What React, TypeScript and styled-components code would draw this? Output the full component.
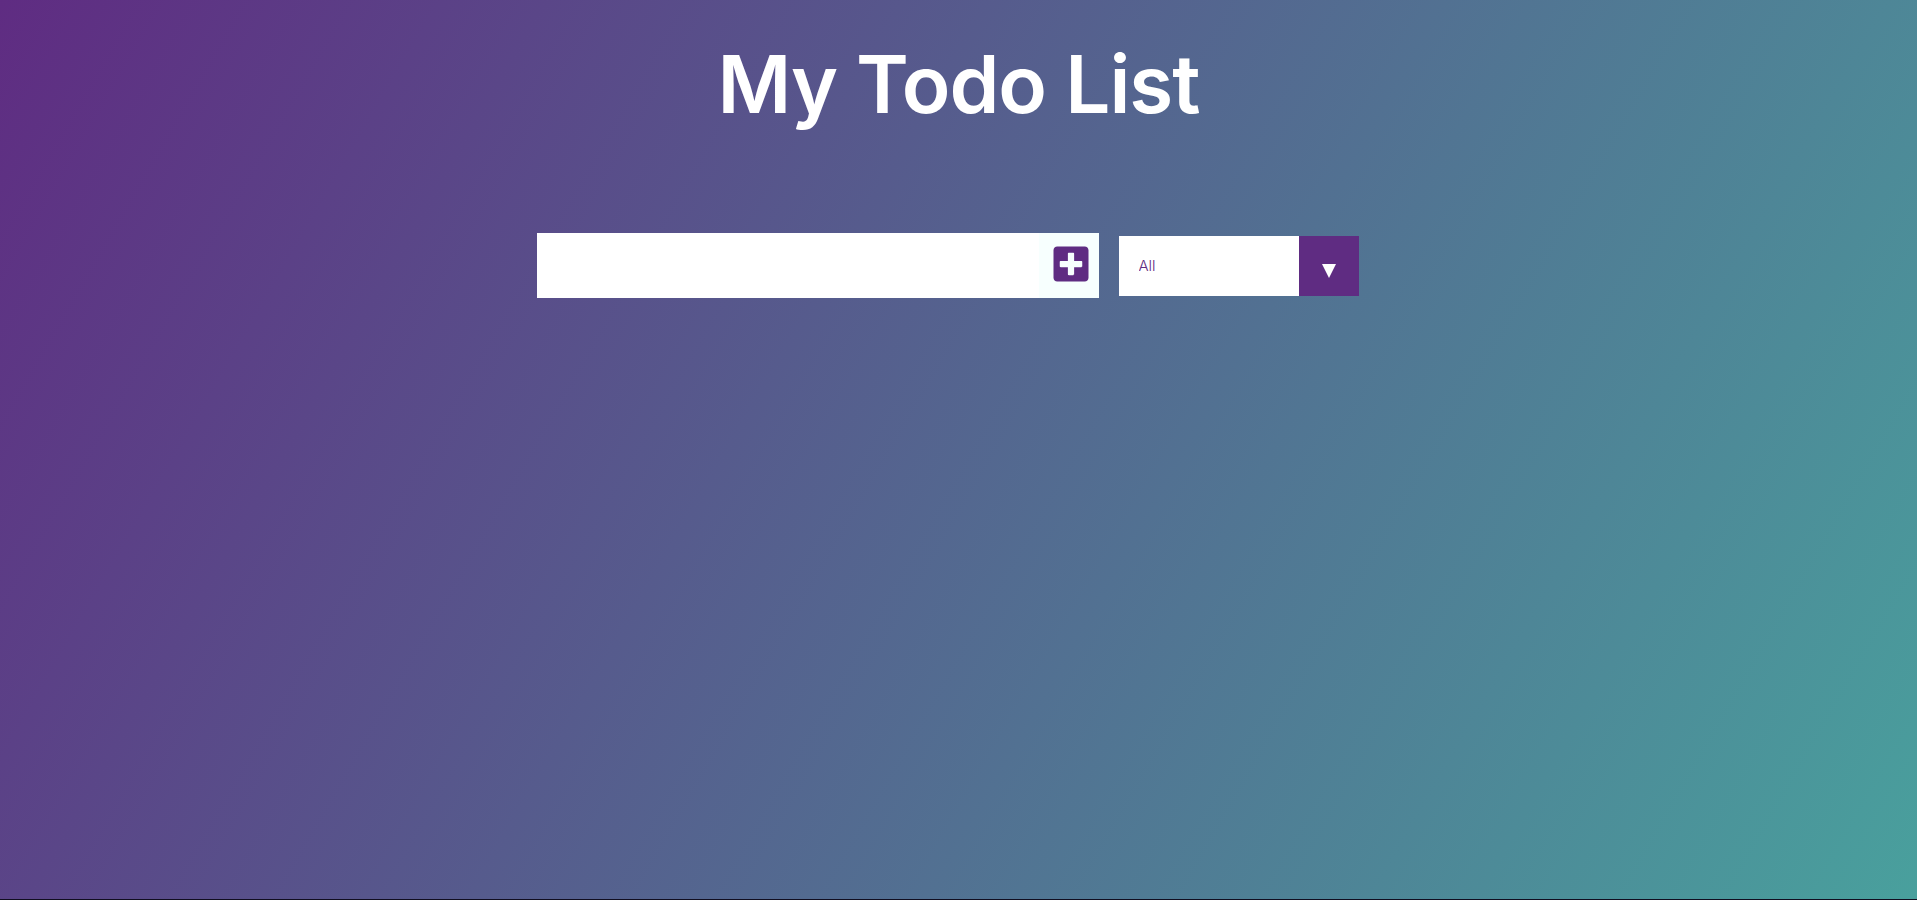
import React from "react";
import styled, { createGlobalStyle } from "styled-components";
import { FaPlusSquare } from "react-icons/fa";

const GlobalStyle = createGlobalStyle`
  html {
    background: #110e20;
  }
  body {
    margin: 0;
    font-family: "Inter", "Liberation Sans", sans-serif;
  }
  * {
    box-sizing: border-box;
  }
`;

const Page = styled.div`
  min-height: 899px;
  background-image: linear-gradient(120deg, #5f2c82 0%, #49a09d 100%);
  display: flex;
  flex-direction: column;
  align-items: center;
  padding-top: 44px;
`;

const Title = styled.h1`
  margin: 0;
  font-family: "Inter", "Liberation Sans", sans-serif;
  font-weight: 600;
  font-size: 80px;
  line-height: 80px;
  color: #ffffff;
  letter-spacing: -1px;
`;

const Form = styled.form`
  margin-top: 109px;
  display: flex;
  align-items: center;
  justify-content: center;
  width: 100%;
  padding-right: 22px;
`;

const InputGroup = styled.div`
  display: flex;
  width: 562px;
  height: 65px;
  background: #ffffff;
`;

const TodoInput = styled.input`
  flex: 1;
  min-width: 0;
  border: none;
  outline: none;
  background: #ffffff;
  padding: 0 12px;
  font-family: "Inter", sans-serif;
  font-size: 24px;
  color: #333;
`;

const AddButton = styled.button`
  border: none;
  background: #f7fffe;
  color: #5f2c82;
  padding: 0 8px 4px 12px;
  display: flex;
  align-items: center;
  cursor: pointer;
`;

const SelectWrap = styled.div`
  margin-left: 20px;
  display: flex;
  width: 240px;
  height: 60px;
  background: #ffffff;
  overflow: hidden;
`;

const Select = styled.select`
  flex: 1;
  min-width: 0;
  appearance: none;
  -webkit-appearance: none;
  border: none;
  outline: none;
  background: #ffffff;
  color: #5f2c82;
  font-family: "Inter", sans-serif;
  font-weight: 300;
  font-size: 15px;
  padding: 0 0 0 20px;
  cursor: pointer;
`;

const ArrowBox = styled.span`
  width: 60px;
  height: 60px;
  background: #5f2c82;
  display: flex;
  align-items: center;
  justify-content: center;
  padding-top: 11px;
  pointer-events: none;
`;

const Triangle = styled.span`
  width: 0;
  height: 0;
  border-left: 7.5px solid transparent;
  border-right: 7.5px solid transparent;
  border-top: 14px solid #ffffff;
`;

export default function App() {
  return (
    <>
      <GlobalStyle />
      <Page>
        <Title>My Todo List</Title>
        <Form onSubmit={(e) => e.preventDefault()}>
          <InputGroup>
            <TodoInput type="text" />
            <AddButton type="submit" aria-label="Add todo">
              <FaPlusSquare size={40} />
            </AddButton>
          </InputGroup>
          <SelectWrap>
            <Select defaultValue="all">
              <option value="all">All</option>
              <option value="completed">Completed</option>
              <option value="uncompleted">Uncompleted</option>
            </Select>
            <ArrowBox>
              <Triangle />
            </ArrowBox>
          </SelectWrap>
        </Form>
      </Page>
    </>
  );
}
